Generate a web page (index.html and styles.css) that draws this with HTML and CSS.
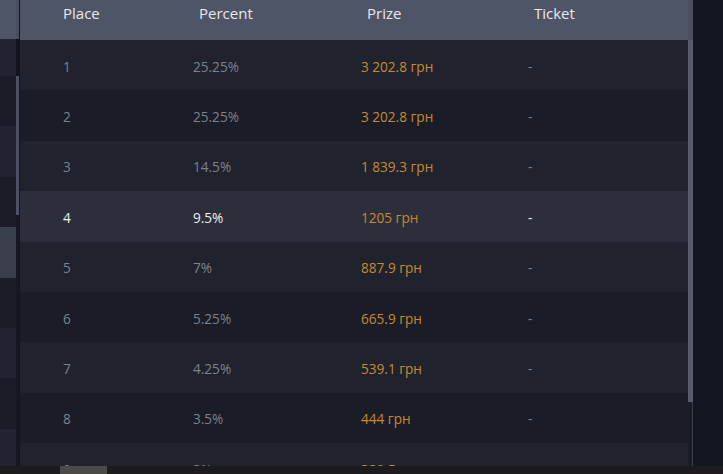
FILE: index.html
```html
<!DOCTYPE html>
<html>
<head>
<meta charset="utf-8">
<link rel="stylesheet" href="styles.css">
</head>
<body>
<div class="page">
  <div class="view">
    <div class="side">
      <div class="side-strip">
        <div class="side-head"></div>
        <div class="s-row odd short"></div>
        <div class="s-row even"></div>
        <div class="s-row odd"></div>
        <div class="s-row even"></div>
        <div class="s-row sel"></div>
        <div class="s-row even"></div>
        <div class="s-row odd"></div>
        <div class="s-row even"></div>
        <div class="s-row odd"></div>
      </div>
      <div class="side-scroll">
        <div class="side-scroll-head"></div>
        <div class="side-scroll-gap"></div>
        <div class="side-thumb"></div>
      </div>
    </div>
    <div class="main">
      <div class="table">
        <div class="thead">
          <div class="th">Place</div>
          <div class="th shift">Percent</div>
          <div class="th shift">Prize</div>
          <div class="th shift">Ticket</div>
        </div>
        <div class="tbody">
          <div class="tr odd"><div class="td">1</div><div class="td">25.25%</div><div class="td prize">3 202.8 грн</div><div class="td">-</div></div>
          <div class="tr even"><div class="td">2</div><div class="td">25.25%</div><div class="td prize">3 202.8 грн</div><div class="td">-</div></div>
          <div class="tr odd"><div class="td">3</div><div class="td">14.5%</div><div class="td prize">1 839.3 грн</div><div class="td">-</div></div>
          <div class="tr active"><div class="td">4</div><div class="td">9.5%</div><div class="td prize">1205 грн</div><div class="td">-</div></div>
          <div class="tr odd"><div class="td">5</div><div class="td">7%</div><div class="td prize">887.9 грн</div><div class="td">-</div></div>
          <div class="tr even"><div class="td">6</div><div class="td">5.25%</div><div class="td prize">665.9 грн</div><div class="td">-</div></div>
          <div class="tr odd"><div class="td">7</div><div class="td">4.25%</div><div class="td prize">539.1 грн</div><div class="td">-</div></div>
          <div class="tr even"><div class="td">8</div><div class="td">3.5%</div><div class="td prize">444 грн</div><div class="td">-</div></div>
          <div class="tr odd"><div class="td">9</div><div class="td">3%</div><div class="td prize">380.5 грн</div><div class="td">-</div></div>
        </div>
      </div>
      <div class="vscroll">
        <div class="vscroll-head"></div>
        <div class="vthumb"></div>
        <div class="vtrack"></div>
      </div>
    </div>
    <div class="right"></div>
  </div>
  <div class="hscroll">
    <div class="hthumb"></div>
  </div>
</div>
</body>
</html>
```
FILE: styles.css
```css
* { box-sizing: border-box; }
html, body {
  margin: 0;
  padding: 0;
  background: #131722;
  font-family: "Open Sans", "Noto Sans", sans-serif;
}
.page {
  width: 723px;
  height: 474px;
  display: flex;
  flex-direction: column;
  overflow: hidden;
}
.view {
  flex: 1;
  display: flex;
  overflow: hidden;
  min-height: 0;
}
/* left partial panel */
.side {
  width: 20px;
  display: flex;
  flex-shrink: 0;
}
.side-strip {
  width: 16px;
  display: flex;
  flex-direction: column;
}
.side-head {
  height: 39px;
  background: #4e5566;
  flex-shrink: 0;
}
.s-row {
  height: 50.4px;
  flex-shrink: 0;
}
.s-row.short { height: 37px; }
.s-row.odd { background: #212430; }
.s-row.even { background: #1a1d28; }
.s-row.sel { background: #3a3f4c; }
.side-scroll {
  width: 4px;
  display: flex;
  flex-direction: column;
  background: #151821;
  border-right: 1px solid #11141c;
}
.side-scroll-head {
  height: 39px;
  background: #4a5061;
}
.side-scroll-gap {
  height: 37px;
  background: #11141c;
}
.side-thumb {
  height: 139px;
  width: 3px;
  background: #4b5162;
}
/* main table */
.main {
  width: 673px;
  display: flex;
  flex-shrink: 0;
}
.table {
  width: 668px;
  display: flex;
  flex-direction: column;
}
.thead {
  height: 40px;
  background: #4e5566;
  display: grid;
  grid-template-columns: 130px 168px 167px 1fr;
  padding-left: 43px;
  flex-shrink: 0;
}
.th {
  color: #e6e9f0;
  font-size: 15px;
  line-height: 20px;
  padding-top: 3px;
}
.th.shift { padding-left: 6px; }
.tr {
  height: 50.4px;
  display: grid;
  grid-template-columns: 130px 168px 167px 1fr;
  padding-left: 43px;
  align-items: center;
  padding-top: 3px;
}
.tr.odd { background: #20232e; }
.tr.even { background: #1a1d27; }
.tr.active { background: #2c2f3b; }
.td {
  color: #7c818d;
  font-size: 13.6px;
  line-height: 18px;
}
.td.prize { color: #c68a2f; }
.tr.active .td { color: #eef0f5; }
.tr.active .td.prize { color: #c68a2f; }
.vscroll {
  width: 5px;
  display: flex;
  flex-direction: column;
  flex-shrink: 0;
}
.vscroll-head {
  height: 40px;
  background: #4a5061;
  flex-shrink: 0;
}
.vthumb {
  height: 362px;
  background: #575d6d;
  flex-shrink: 0;
}
.vtrack {
  flex: 1;
  background: #1a1d27;
  border-right: 1px solid #3a3f4c;
}
.right {
  flex: 1;
  background: #131722;
}
/* bottom horizontal scrollbar */
.hscroll {
  height: 8px;
  background: #1c1c1e;
  flex-shrink: 0;
  padding-left: 60px;
}
.hthumb {
  width: 47px;
  height: 8px;
  background: #4a4a4b;
}
```
